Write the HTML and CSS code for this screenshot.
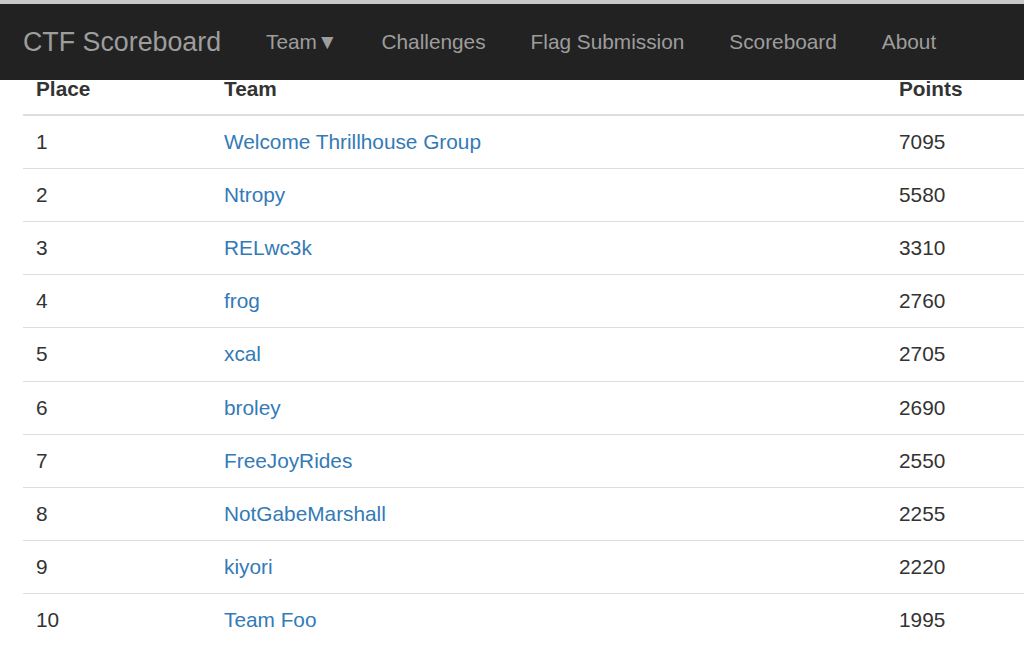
FILE: index.html
```html
<!DOCTYPE html>
<html>
<head>
<meta charset="utf-8">
<link rel="stylesheet" href="styles.css">
</head>
<body>
<nav class="navbar">
  <a class="brand" href="#">CTF Scoreboard</a>
  <ul class="nav">
    <li><a href="#">Team&#9660;</a></li>
    <li><a href="#">Challenges</a></li>
    <li><a href="#">Flag Submission</a></li>
    <li><a href="#">Scoreboard</a></li>
    <li><a href="#">About</a></li>
  </ul>
</nav>
<main class="content">
  <table class="scores">
    <thead>
      <tr><th class="c-place">Place</th><th class="c-team">Team</th><th class="c-points">Points</th></tr>
    </thead>
    <tbody>
      <tr><td>1</td><td><a href="#">Welcome Thrillhouse Group</a></td><td>7095</td></tr>
      <tr><td>2</td><td><a href="#">Ntropy</a></td><td>5580</td></tr>
      <tr><td>3</td><td><a href="#">RELwc3k</a></td><td>3310</td></tr>
      <tr><td>4</td><td><a href="#">frog</a></td><td>2760</td></tr>
      <tr><td>5</td><td><a href="#">xcal</a></td><td>2705</td></tr>
      <tr><td>6</td><td><a href="#">broley</a></td><td>2690</td></tr>
      <tr><td>7</td><td><a href="#">FreeJoyRides</a></td><td>2550</td></tr>
      <tr><td>8</td><td><a href="#">NotGabeMarshall</a></td><td>2255</td></tr>
      <tr><td>9</td><td><a href="#">kiyori</a></td><td>2220</td></tr>
      <tr><td>10</td><td><a href="#">Team Foo</a></td><td>1995</td></tr>
    </tbody>
  </table>
</main>
</body>
</html>
```
FILE: styles.css
```css
html, body {
  margin: 0;
  padding: 0;
  background: #fff;
  overflow: hidden;
  font-family: "Liberation Sans", Arial, sans-serif;
  color: #333;
}
.navbar {
  position: fixed;
  top: 0;
  left: 0;
  right: 0;
  height: 76px;
  border-top: 4px solid #c9c9c9;
  background: #222;
  display: flex;
  align-items: center;
  padding-left: 23px;
  z-index: 10;
}
.brand {
  color: #9d9d9d;
  text-decoration: none;
  font-size: 26.8px;
  margin-right: 45px;
}
.nav {
  list-style: none;
  margin: 0;
  padding: 0;
  display: flex;
  gap: 45px;
}
.nav li:first-child {
  margin-right: -1px;
}
.nav a {
  color: #9d9d9d;
  text-decoration: none;
  font-size: 20.8px;
}
.content {
  padding-top: 63px;
  padding-left: 23px;
}
.scores {
  width: 1100px;
  border-collapse: collapse;
  font-size: 20.8px;
  line-height: 28.1px;
}
.scores th, .scores td {
  text-align: left;
  padding: 12px 12px 12px 13px;
  border-top: 1px solid #ddd;
  vertical-align: top;
}
.scores thead th {
  border-top: none;
  border-bottom: 2px solid #ddd;
  font-weight: bold;
  padding-bottom: 11px;
}
.c-place { width: 163px; }
.c-team { width: 650px; }
.scores a {
  color: #337ab7;
  text-decoration: none;
}
```
